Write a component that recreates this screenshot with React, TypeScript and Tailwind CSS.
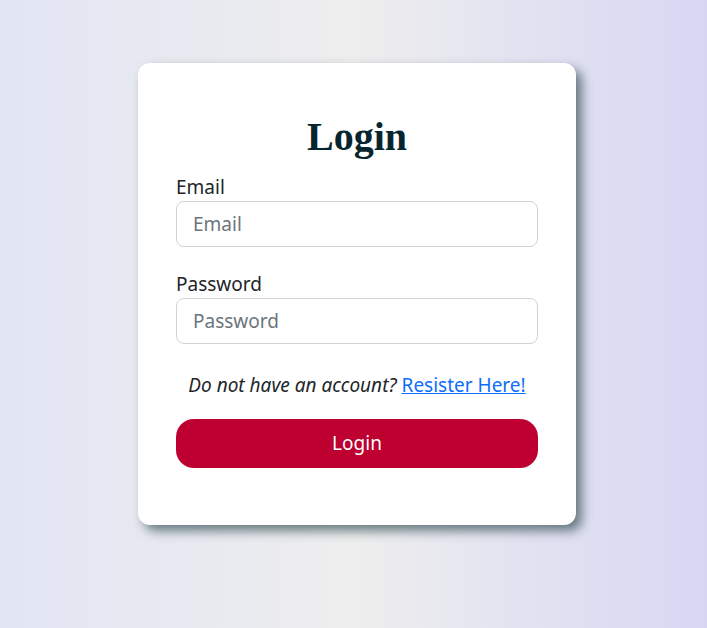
import React from 'react';

export default function App() {
  return (
    <div
      className="min-h-[628px] w-full bg-gradient-to-r from-[#e2e5f4] via-[#eeeeee] to-[#d7d7f4] pl-[7px] pt-[63px]"
      style={{ fontFamily: '"Noto Sans", "Open Sans", sans-serif' }}
    >
      <div className="mx-auto w-[438px] h-[462px] rounded-xl bg-white px-[38px] pt-[50px] shadow-[6px_6px_11px_rgba(70,95,100,0.8)]">
        <h1
          className="text-center text-[40px] font-bold leading-[48px] text-[#06262f]"
          style={{ fontFamily: '"Liberation Serif", "Times New Roman", serif' }}
        >
          Login
        </h1>

        <form className="mt-[13px] flex flex-col" onSubmit={(e) => e.preventDefault()}>
          <label className="text-[19px] leading-[27px] text-[#212529]" htmlFor="email">Email</label>
          <input
            id="email"
            type="email"
            placeholder="Email"
            className="h-[46px] w-full rounded-lg border border-[#ced4da] px-4 text-[19px] text-[#212529] placeholder:text-[#6c757d] outline-none"
          />

          <label className="mt-[24px] text-[19px] leading-[27px] text-[#212529]" htmlFor="password">Password</label>
          <input
            id="password"
            type="password"
            placeholder="Password"
            className="h-[46px] w-full rounded-lg border border-[#ced4da] px-4 text-[19px] text-[#212529] placeholder:text-[#6c757d] outline-none"
          />

          <p className="mt-[26px] text-center text-[19px] italic leading-[30px] text-[#212529]">
            Do not have an account?{' '}
            <a href="#" className="not-italic text-[#0d6efd] underline">Resister Here!</a>
          </p>

          <button
            type="submit"
            className="mt-[19px] h-[49px] w-full rounded-[18px] bg-[#bd0030] text-[19px] text-white"
          >
            Login
          </button>
        </form>
      </div>
    </div>
  );
}
